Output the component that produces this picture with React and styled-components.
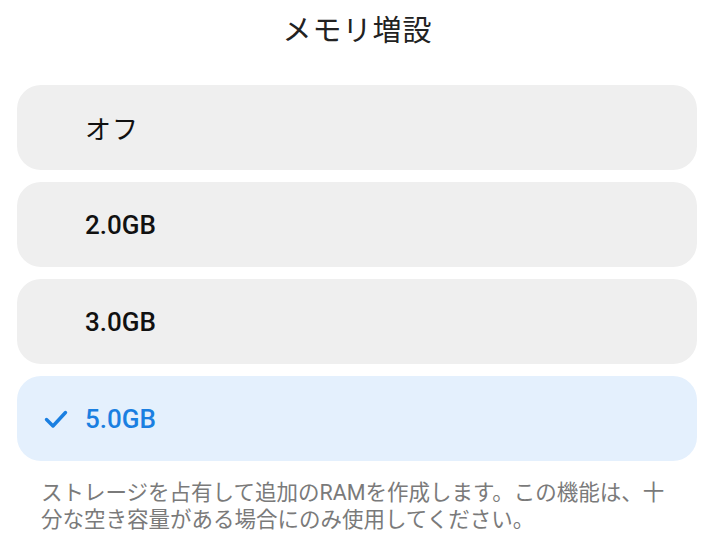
import styled, { createGlobalStyle } from "styled-components";

const GlobalStyle = createGlobalStyle`
  body {
    margin: 0;
    background: #ffffff;
    font-family: Roboto, "Noto Sans CJK JP", sans-serif;
  }
`;

const Page = styled.div`
  width: 715px;
  height: 545px;
  overflow: hidden;
  display: flex;
  flex-direction: column;
`;

const Title = styled.h1`
  margin: 0;
  height: 56px;
  display: flex;
  align-items: center;
  justify-content: center;
  font-size: 29px;
  font-weight: 400;
  color: #222222;
  letter-spacing: 1px;
`;

const List = styled.div`
  display: flex;
  flex-direction: column;
  gap: 12px;
  padding: 29px 18px 0 17px;
`;

const Option = styled.div`
  height: 85px;
  border-radius: 24px;
  background: ${p => (p.$selected ? "#e4f0fd" : "#efefef")};
  color: ${p => (p.$selected ? "#1a7fe1" : "#111111")};
  display: flex;
  align-items: center;
  padding-left: 27px;
  cursor: pointer;
`;

const Check = styled.span`
  width: 41px;
  display: flex;
  align-items: center;
`;

const Label = styled.span`
  font-size: 26px;
  font-weight: ${p => (p.$plain ? 400 : 500)};
  letter-spacing: ${p => (p.$plain ? "1px" : "0")};
`;

const Note = styled.p`
  margin: 18px 0 0 41px;
  width: 628px;
  font-size: 21.5px;
  line-height: 27px;
  color: #7a7a7a;
`;

const CheckIcon = () => (
  <svg width="24" height="24" viewBox="0 0 24 24" fill="none">
    <path d="M2.5 12.5l6.5 6.5L21.5 5.5" stroke="#1a7fe1" strokeWidth="3.4" strokeLinecap="round" strokeLinejoin="round" />
  </svg>
);

const options = ["オフ", "2.0GB", "3.0GB", "5.0GB"];

export default function App() {
  const selected = "5.0GB";
  return (
    <Page>
      <GlobalStyle />
      <Title>メモリ増設</Title>
      <List>
        {options.map(item => (
          <Option key={item} $selected={item === selected}>
            <Check>{item === selected && <CheckIcon />}</Check>
            <Label $plain={item === "オフ"}>{item}</Label>
          </Option>
        ))}
      </List>
      <Note>
        ストレージを占有して追加のRAMを作成します。この機能は、十分な空き容量がある場合にのみ使用してください。
      </Note>
    </Page>
  );
}
